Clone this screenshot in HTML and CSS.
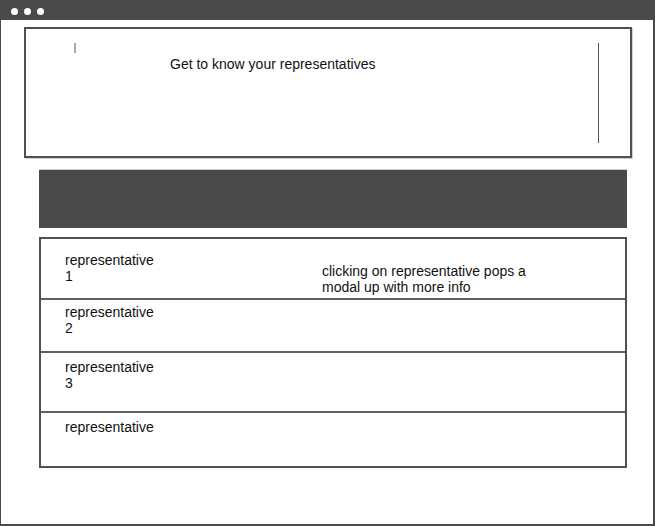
FILE: index.html
```html
<!DOCTYPE html>
<html>
<head>
<meta charset="utf-8">
<link rel="stylesheet" href="styles.css">
</head>
<body>
<div class="window">
  <div class="titlebar">
    <span class="dot"></span><span class="dot"></span><span class="dot"></span>
  </div>
  <div class="content">
    <div class="hero">
      <span class="cursor"></span>
      <span class="hero-title">Get to know your representatives</span>
      <span class="divider"></span>
    </div>
    <div class="banner"></div>
    <div class="list">
      <div class="row row-1">
        <div class="name">representative 1</div>
        <div class="note">clicking on representative pops a modal up with more info</div>
      </div>
      <div class="row row-2">
        <div class="name">representative 2</div>
      </div>
      <div class="row row-3">
        <div class="name">representative 3</div>
      </div>
      <div class="row row-4">
        <div class="name">representative</div>
      </div>
    </div>
  </div>
</div>
</body>
</html>
```
FILE: styles.css
```css
* { box-sizing: border-box; }
html, body { margin: 0; padding: 0; background: #fff; }
body {
  font-family: "Liberation Sans", Arial, sans-serif;
  font-size: 14px;
  line-height: 16px;
  color: #111;
}
.window {
  width: 655px;
  height: 526px;
  border: 1px solid #4a4a4a;
  border-right-width: 2px;
  border-bottom-width: 2px;
  border-top: none;
  display: flex;
  flex-direction: column;
  overflow: hidden;
}
.titlebar {
  height: 20px;
  background: #4a4a4a;
  display: flex;
  align-items: center;
  gap: 6px;
  padding-left: 11px;
  margin: 0 -2px 0 -1px;
  padding-top: 2px;
}
.dot {
  width: 7px;
  height: 7px;
  border-radius: 50%;
  background: #fff;
}
.content {
  padding: 7px 0 0 23px;
}
.hero {
  width: 608px;
  height: 131px;
  border: 2px solid #505050;
  box-shadow: 1px 1px 0 #d0d0d0;
  display: flex;
  align-items: flex-start;
  padding-top: 14px;
}
.cursor {
  width: 2px;
  height: 10px;
  background: #aaa;
  margin-left: 48px;
}
.hero-title {
  margin-left: 94px;
  margin-top: 13px;
  flex: 1;
}
.divider {
  width: 1px;
  height: 100px;
  background: #555;
  margin-right: 31px;
}
.banner {
  margin: 11px 0 0 15px;
  width: 588px;
  height: 59px;
  background: #4a4a4a;
  border-top: 1px solid #ccc;
}
.list {
  margin: 9px 0 0 15px;
  width: 588px;
  height: 231px;
  border: 2px solid #505050;
  display: flex;
  flex-direction: column;
}
.row {
  display: grid;
  grid-template-columns: 257px 1fr;
  align-items: start;
  padding-left: 24px;
  border-bottom: 2px solid #606060;
}
.row:last-child { border-bottom: none; flex: 1; }
.name { width: 100px; }
.note { width: 230px; margin-top: 11px; }
.row-1 { height: 61px; padding-top: 13px; }
.row-2 { height: 53px; padding-top: 4px; }
.row-3 { height: 60px; padding-top: 6px; }
.row-4 { padding-top: 6px; }
```
